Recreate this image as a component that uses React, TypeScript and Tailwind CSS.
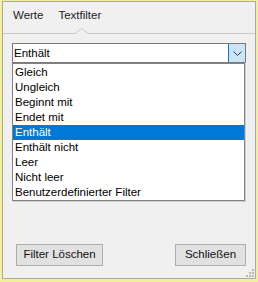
const options = [
  "Gleich",
  "Ungleich",
  "Beginnt mit",
  "Endet mit",
  "Enthält",
  "Enthält nicht",
  "Leer",
  "Nicht leer",
  "Benutzerdefinierter Filter",
];

const selected = "Enthält";

function ResizeGrip() {
  const dots = [
    [6, 0],
    [3, 3],
    [6, 3],
    [0, 6],
    [3, 6],
    [6, 6],
  ];
  return (
    <svg className="pointer-events-none absolute bottom-[1px] right-[1px]" width="8" height="8">
      {dots.map(([x, y]) => (
        <rect key={`${x}-${y}`} x={x} y={y} width="2" height="2" fill="#b9b9b9" />
      ))}
    </svg>
  );
}

export default function App() {
  return (
    <div className="h-[282px] w-[258px] bg-[#f3f09c] pl-[2px] pt-[1px]">
      <div className="relative flex h-[278px] w-[254px] flex-col border border-[#a9a9a9] bg-[#f0f0f0] font-['Liberation_Sans',Arial,sans-serif] text-[11.5px] text-black">
        {/* tab header */}
        <div className="relative flex h-[32px] shrink-0 items-center gap-[15px] border-b border-[#c9c9c9] pb-[3px] pl-[10px] text-[#222]">
          <span>Werte</span>
          <span>Textfilter</span>
          <svg className="absolute left-[72px] top-[26px]" width="13" height="7">
            <polygon points="0,6 6.5,0.5 13,6" fill="#f0f0f0" />
            <polyline points="0,5.5 6.5,0.5 13,5.5" fill="none" stroke="#c9c9c9" />
          </svg>
        </div>

        {/* combobox + open list */}
        <div className="ml-[9px] mt-[9px] w-[234px]">
          <div className="flex h-[20px] border border-[#7a7a7a] bg-white">
            <span className="pl-[1px] leading-[18px]">{selected}</span>
            <div className="ml-auto flex w-[17px] items-center justify-center border-l border-[#0078d7] bg-[#cce4f7]">
              <svg width="9" height="5" viewBox="0 0 9 5">
                <polyline points="0.5,0.5 4.5,4.5 8.5,0.5" fill="none" stroke="#404040" strokeWidth="1" />
              </svg>
            </div>
          </div>
          <div className="w-[233px] border border-[#828282] bg-white pt-[1px] shadow-[1px_1px_0_#cdcdcd]">
            {options.map((o) => (
              <div
                key={o}
                className={
                  o === selected
                    ? "h-[15px] bg-[#0078d7] pl-[2px] leading-[15px] text-white"
                    : "h-[15px] pl-[2px] leading-[15px]"
                }
              >
                {o}
              </div>
            ))}
          </div>
        </div>

        {/* buttons */}
        <div className="mb-[12px] mt-auto flex justify-between pl-[13px] pr-[9px]">
          <button className="h-[22px] w-[87px] border border-[#adadad] bg-[#e1e1e1] text-[#111]">Filter Löschen</button>
          <button className="h-[22px] w-[71px] border border-[#adadad] bg-[#e1e1e1] text-[#111]">Schließen</button>
        </div>

        <ResizeGrip />
      </div>
    </div>
  );
}
